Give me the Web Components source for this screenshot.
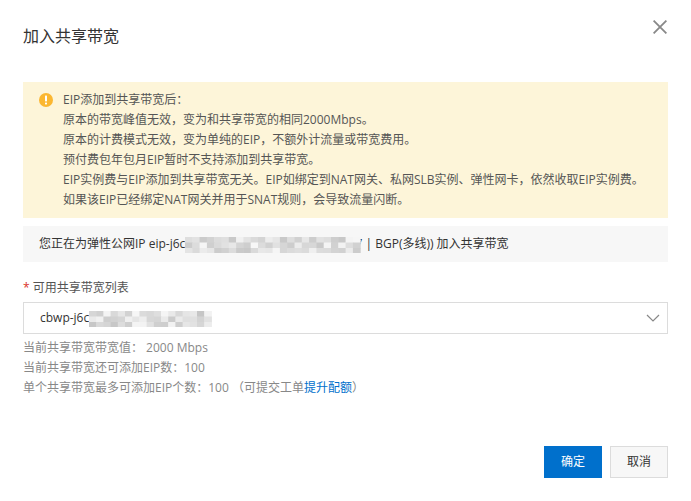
<!DOCTYPE html>
<html lang="zh-CN">
<head>
<meta charset="utf-8">
<title>加入共享带宽</title>
<style>
	html, body {
		margin: 0;
		background: #fff;
	}
	body {
		font-family: "Open Sans", "Noto Sans CJK SC", sans-serif;
		font-size: 12px;
		color: #333;
	}
	a {
		color: #0070cc;
	}
</style>
</head>
<body>
<x-dialog>
	<span slot="title">加入共享带宽</span>
	<x-alert>
		<div>EIP添加到共享带宽后：</div>
		<div>原本的带宽峰值无效，变为和共享带宽的相同2000Mbps。</div>
		<div>原本的计费模式无效，变为单纯的EIP，不额外计流量或带宽费用。</div>
		<div>预付费包年包月EIP暂时不支持添加到共享带宽。</div>
		<div>EIP实例费与EIP添加到共享带宽无关。EIP如绑定到NAT网关、私网SLB实例、弹性网卡，依然收取EIP实例费。</div>
		<div>如果该EIP已经绑定NAT网关并用于SNAT规则，会导致流量闪断。</div>
	</x-alert>
	<x-info-bar>您正在为弹性公网IP eip-j6c<x-mosaic cols="24" rows="3" seed="7" cw="7.3" ch="5.5" style="margin-right: -5px"></x-mosaic>7 | BGP(多线)) 加入共享带宽</x-info-bar>
	<x-field label="可用共享带宽列表">
		<x-select>cbwp-j6c<x-mosaic cols="17" rows="3" seed="3" cw="7.2" ch="5.5"></x-mosaic></x-select>
		<x-hints slot="hints">
			<div>当前共享带宽带宽值： 2000 Mbps</div>
			<div>当前共享带宽还可添加EIP数：100</div>
			<div>单个共享带宽最多可添加EIP个数：100 （可提交工单<a>提升配额</a>）</div>
		</x-hints>
	</x-field>
	<x-button slot="footer" primary>确定</x-button>
	<x-button slot="footer">取消</x-button>
</x-dialog>

<script>
	/* 画面全体のダイアログ */
	class XDialog extends HTMLElement {
		constructor() {
			super();
			this.attachShadow({mode: 'open'}).innerHTML = `
				<style>
					:host {
						display: flex;
						flex-direction: column;
						box-sizing: border-box;
						width: 691px;
						height: 501px;
						padding: 20px 23px 23px;
					}
					header {
						display: flex;
						justify-content: space-between;
						align-items: flex-start;
						height: 62px;
						font-size: 16px;
						line-height: 32px;
						color: #333;
					}
					svg {
						display: block;
						width: 14px;
						height: 14px;
						margin-right: 1px;
					}
					main {
						flex: 1;
						display: flex;
						flex-direction: column;
					}
					footer {
						display: flex;
						justify-content: flex-end;
						gap: 8px;
					}
				</style>
				<header>
					<slot name="title"></slot>
					<svg viewBox="0 0 14 14"><path d="M.6.6l12.8 12.8M13.4.6L.6 13.4" fill="none" stroke="#888" stroke-width="1.8"/></svg>
				</header>
				<main><slot></slot></main>
				<footer><slot name="footer"></slot></footer>
			`;
		}
	}

	/* 警告ボックス */
	class XAlert extends HTMLElement {
		constructor() {
			super();
			this.attachShadow({mode: 'open'}).innerHTML = `
				<style>
					:host {
						display: flex;
						gap: 10px;
						padding: 8px 16px;
						background: #fdf5d9;
						color: #555;
						line-height: 20px;
					}
					svg {
						flex: none;
						width: 14px;
						height: 14px;
						margin-top: 3px;
					}
				</style>
				<svg viewBox="0 0 14 14">
					<circle cx="7" cy="7" r="7" fill="#fbb731"/>
					<rect x="6" y="2.6" width="2" height="5.8" rx=".6" fill="#fff"/>
					<rect x="6" y="9.4" width="2" height="2" rx=".6" fill="#fff"/>
				</svg>
				<div><slot></slot></div>
			`;
		}
	}

	class XInfoBar extends HTMLElement {
		constructor() {
			super();
			this.attachShadow({mode: 'open'}).innerHTML = `
				<style>
					:host {
						display: block;
						margin-top: 8px;
						padding: 0 16px;
						background: #f7f7f7;
						color: #333;
						line-height: 36px;
						white-space: nowrap;
					}
				</style>
				<slot></slot>
			`;
		}
	}

	/* 伏せ字のモザイク */
	class XMosaic extends HTMLElement {
		connectedCallback() {
			const cols = Number(this.getAttribute('cols'));
			const rows = Number(this.getAttribute('rows'));
			const cw = Number(this.getAttribute('cw'));
			const ch = Number(this.getAttribute('ch'));
			let seed = Number(this.getAttribute('seed'));
			let rects = '';
			for (let y = 0; y < rows; y++) {
				for (let x = 0; x < cols; x++) {
					seed = (seed * 9301 + 49297) % 233280;
					const grey = 198 + Math.floor(seed / 233280 * 50);
					rects += `<rect x="${x * cw}" y="${y * ch}" width="${cw + .5}" height="${ch + .5}" fill="rgb(${grey},${grey},${grey})"/>`;
				}
			}
			this.attachShadow({mode: 'open'}).innerHTML = `
				<style>
					:host {
						display: inline-block;
						position: relative;
						vertical-align: middle;
						line-height: 0;
					}
					svg {
						filter: blur(.7px);
					}
				</style>
				<svg width="${cols * cw}" height="${rows * ch}">${rects}</svg>
			`;
		}
	}

	class XField extends HTMLElement {
		constructor() {
			super();
			this.attachShadow({mode: 'open'}).innerHTML = `
				<style>
					:host {
						display: block;
						margin-top: 14px;
					}
					label {
						display: block;
						height: 26px;
						line-height: 24px;
						color: #555;
					}
					i {
						color: #d93026;
						font-style: normal;
					}
				</style>
				<label><i>*</i> <span id="text"></span></label>
				<slot></slot>
				<slot name="hints"></slot>
			`;
		}

		connectedCallback() {
			this.shadowRoot.getElementById('text').textContent = this.getAttribute('label');
		}
	}

	class XSelect extends HTMLElement {
		constructor() {
			super();
			this.attachShadow({mode: 'open'}).innerHTML = `
				<style>
					:host {
						display: flex;
						justify-content: space-between;
						align-items: center;
						box-sizing: border-box;
						height: 32px;
						padding: 0 7px 0 16px;
						border: 1px solid #dcdcdc;
						color: #333;
						white-space: nowrap;
					}
					svg {
						width: 14px;
						height: 8px;
					}
				</style>
				<span><slot></slot></span>
				<svg viewBox="0 0 14 8"><path d="M1 1l6 6 6-6" fill="none" stroke="#888" stroke-width="1.2"/></svg>
			`;
		}
	}

	class XHints extends HTMLElement {
		constructor() {
			super();
			this.attachShadow({mode: 'open'}).innerHTML = `
				<style>
					:host {
						display: block;
						margin-top: 4px;
						color: #888;
						line-height: 20px;
					}
					::slotted(div) {
						white-space: nowrap;
					}
				</style>
				<slot></slot>
			`;
		}
	}

	class XButton extends HTMLElement {
		constructor() {
			super();
			this.attachShadow({mode: 'open'}).innerHTML = `
				<style>
					:host {
						display: block;
						box-sizing: border-box;
						width: 58px;
						height: 32px;
						border: 1px solid #dcdcdc;
						background: #f7f7f7;
						color: #333;
						text-align: center;
						line-height: 30px;
					}
					:host([primary]) {
						border-color: #0070cc;
						background: #0070cc;
						color: #fff;
					}
				</style>
				<slot></slot>
			`;
		}
	}

	customElements.define('x-dialog', XDialog);
	customElements.define('x-alert', XAlert);
	customElements.define('x-info-bar', XInfoBar);
	customElements.define('x-mosaic', XMosaic);
	customElements.define('x-field', XField);
	customElements.define('x-select', XSelect);
	customElements.define('x-hints', XHints);
	customElements.define('x-button', XButton);
</script>
</body>
</html>
